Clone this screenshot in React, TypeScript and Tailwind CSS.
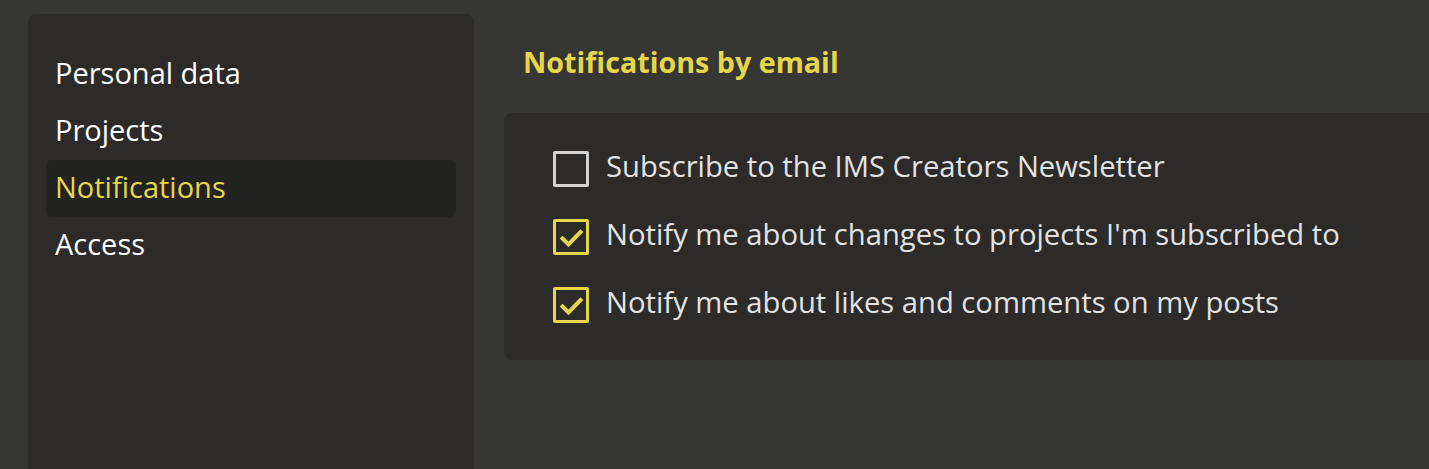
import React from "react";

const navItems = [
  { label: "Personal data", active: false },
  { label: "Projects", active: false },
  { label: "Notifications", active: true },
  { label: "Access", active: false },
];

const options = [
  { label: "Subscribe to the IMS Creators Newsletter", checked: false },
  { label: "Notify me about changes to projects I'm subscribed to", checked: true },
  { label: "Notify me about likes and comments on my posts", checked: true },
];

function Checkbox({ checked }: { checked: boolean }) {
  return (
    <div
      className={`relative w-[36px] h-[36px] shrink-0 rounded-[2px] border-[3px] ${
        checked ? "border-[#e6d64a]" : "border-[#d2d2d2]"
      }`}
    >
      {checked && (
        <svg
          className="absolute left-[-3px] top-[-3px]"
          width="36"
          height="36"
          viewBox="0 0 36 36"
          fill="none"
        >
          <polyline
            points="9.5,19.5 15.5,25.5 27.5,13"
            stroke="#e6d64a"
            strokeWidth="4"
            strokeLinecap="square"
            strokeLinejoin="miter"
          />
        </svg>
      )}
    </div>
  );
}

export default function App() {
  return (
    <div
      className="w-[1429px] h-[469px] overflow-hidden bg-[#363632] flex"
      style={{ fontFamily: '"Open Sans", "Noto Sans", sans-serif' }}
    >
      <aside className="ml-[28px] mt-[14px] w-[446px] shrink-0 h-[470px] rounded-t-[8px] bg-[#2c2b29] px-[18px] pt-[32px]">
        {navItems.map((item) => (
          <div
            key={item.label}
            className={`h-[57px] flex items-center pl-[9px] pb-[5px] rounded-[6px] text-[29px] leading-none ${
              item.active ? "bg-[#232321] text-[#e6d64a]" : "text-white"
            }`}
          >
            {item.label}
          </div>
        ))}
      </aside>
      <main className="ml-[30px] flex-1 flex flex-col">
        <h2 className="pt-[44px] pb-[33px] pl-[19px] leading-[36px] text-[28.7px] font-bold text-[#e6d64a]">
          Notifications by email
        </h2>
        <div className="h-[247px] rounded-l-[8px] bg-[#2c2b29] pl-[49px] pt-[22px]">
          {options.map((opt) => (
            <div key={opt.label} className="h-[68px] flex items-center gap-[17px]">
              <Checkbox checked={opt.checked} />
              <span className="text-[29.2px] text-[#e2e2e2] leading-none pb-[4px]">{opt.label}</span>
            </div>
          ))}
        </div>
      </main>
    </div>
  );
}
